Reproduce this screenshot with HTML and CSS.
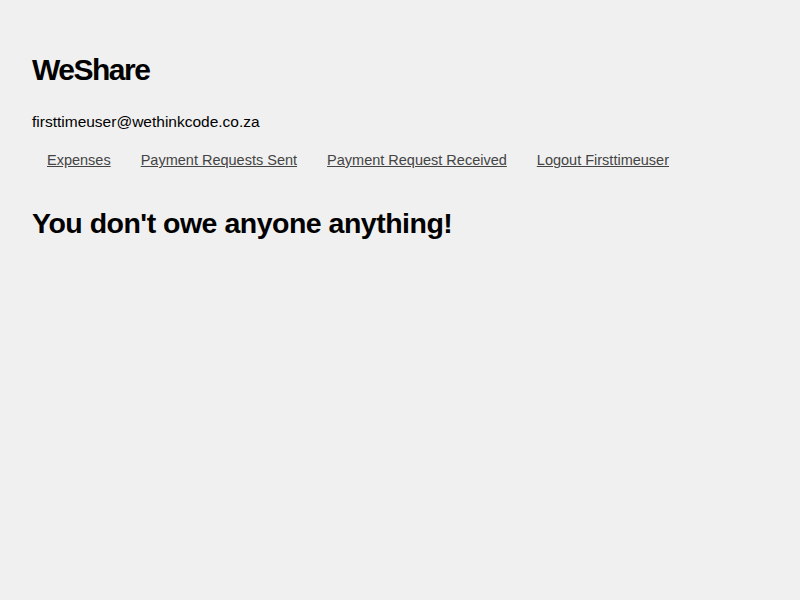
FILE: index.html
```html
<!DOCTYPE html>
<html>
<head>
<meta charset="utf-8">
<link rel="stylesheet" href="styles.css">
</head>
<body>
<header class="header">
  <h1 class="brand">WeShare</h1>
  <div class="email">firsttimeuser@wethinkcode.co.za</div>
  <nav class="nav">
    <a class="nav-link" href="#">Expenses</a>
    <a class="nav-link" href="#">Payment Requests Sent</a>
    <a class="nav-link" href="#">Payment Request Received</a>
    <a class="nav-link" href="#">Logout Firsttimeuser</a>
  </nav>
</header>
<main>
  <h2 class="message">You don't owe anyone anything!</h2>
</main>
</body>
</html>
```
FILE: styles.css
```css
html, body {
  margin: 0;
  background: #f0f0f0;
}
body {
  padding: 0 32px;
  font-family: "Liberation Sans", Arial, sans-serif;
  color: #000;
}
.header {
  padding-top: 50px;
}
.brand {
  margin: 0;
  font-size: 30px;
  font-weight: bold;
  line-height: 40px;
  letter-spacing: -1.5px;
}
.email {
  margin-top: 22px;
  font-size: 15.5px;
  line-height: 20px;
}
.nav {
  display: flex;
  margin-top: 18px;
}
.nav-link {
  padding: 0 15px;
  font-size: 14.5px;
  line-height: 20px;
  color: #444;
  text-decoration: underline;
}
.message {
  margin: 35px 0 0;
  font-size: 28.5px;
  line-height: 36px;
  font-weight: bold;
  letter-spacing: -0.5px;
}
```
